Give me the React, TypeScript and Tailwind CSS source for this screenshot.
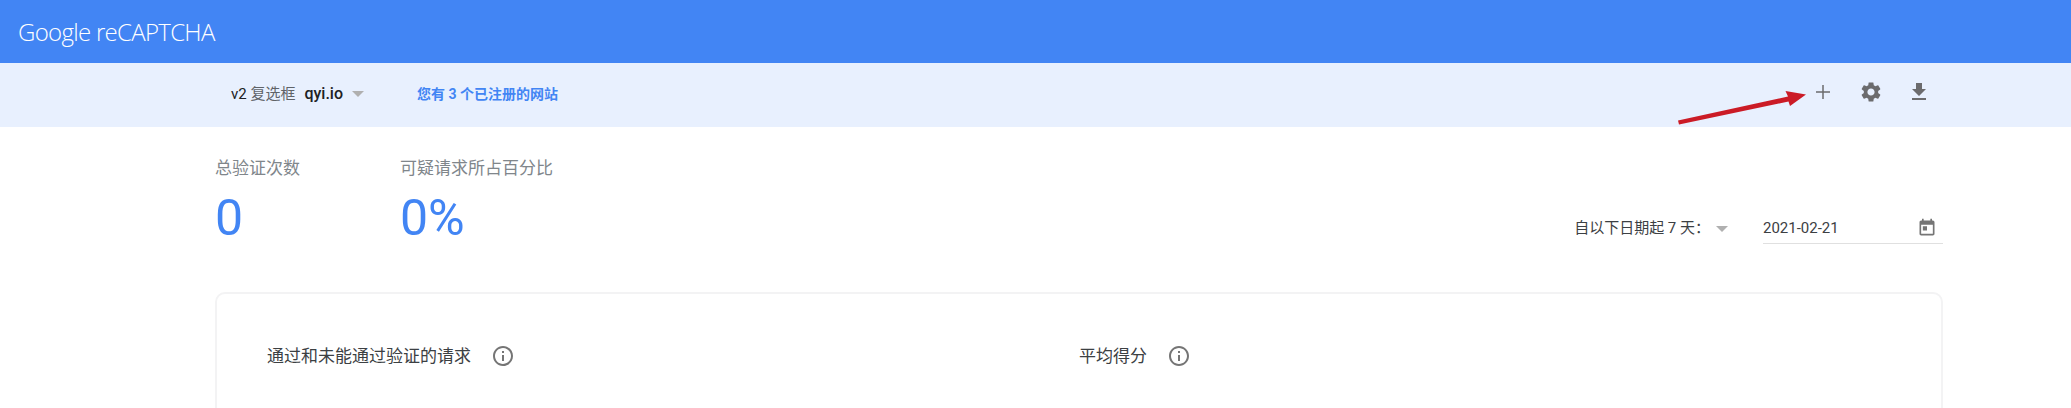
const ui = { fontFamily: 'Roboto, "Noto Sans CJK SC", sans-serif' }

function MaterialIcon({ d, className }: { d: string; className: string }) {
  return (
    <svg viewBox="0 0 24 24" className={className} fill="currentColor">
      <path d={d} />
    </svg>
  )
}

const icons = {
  plus: 'M19 12.75h-6.25V19h-1.5v-6.25H5v-1.5h6.25V5h1.5v6.25H19v1.5z',
  settings:
    'M19.14 12.94c.04-.3.06-.61.06-.94 0-.32-.02-.64-.07-.94l2.03-1.58c.18-.14.23-.41.12-.61l-1.92-3.32c-.12-.22-.37-.29-.59-.22l-2.39.96c-.5-.38-1.03-.7-1.62-.94l-.36-2.54c-.04-.24-.24-.41-.48-.41h-3.84c-.24 0-.43.17-.47.41l-.36 2.54c-.59.24-1.13.57-1.62.94l-2.39-.96c-.22-.08-.47 0-.59.22L2.74 8.87c-.12.21-.08.47.12.61l2.03 1.58c-.05.3-.09.63-.09.94s.02.64.07.94l-2.03 1.58c-.18.14-.23.41-.12.61l1.92 3.32c.12.22.37.29.59.22l2.39-.96c.5.38 1.03.7 1.62.94l.36 2.54c.05.24.24.41.48.41h3.84c.24 0 .44-.17.47-.41l.36-2.54c.59-.24 1.13-.56 1.62-.94l2.39.96c.22.08.47 0 .59-.22l1.92-3.32c.12-.22.07-.47-.12-.61l-2.01-1.58zM12 15.6c-1.98 0-3.6-1.62-3.6-3.6s1.62-3.6 3.6-3.6 3.6 1.62 3.6 3.6-1.62 3.6-3.6 3.6z',
  download: 'M19 9h-4V3H9v6H5l7 7 7-7zM5 18v2h14v-2H5z',
  today:
    'M19 3h-1V1h-2v2H8V1H6v2H5c-1.11 0-1.99.9-1.99 2L3 19c0 1.1.89 2 2 2h14c1.1 0 2-.9 2-2V5c0-1.1-.9-2-2-2zm0 16H5V8h14v11zM7 10h5v5H7z',
  info:
    'M11 7h2v2h-2zm0 4h2v6h-2zm1-9C6.48 2 2 6.48 2 12s4.48 10 10 10 10-4.48 10-10S17.52 2 12 2zm0 18c-4.41 0-8-3.59-8-8s3.59-8 8-8 8 3.59 8 8-3.59 8-8 8z',
}

function Caret({ className }: { className: string }) {
  return <span className={`h-0 w-0 border-x-[6px] border-t-[6px] border-x-transparent border-t-[#b0b0b0] ${className}`} />
}

function Stat({ label, value, className }: { label: string; value: string; className: string }) {
  return (
    <div className={className}>
      <div className="text-[17px] leading-[24px] text-[#80868b]">{label}</div>
      <div className="mt-[10px] text-[50px] leading-[56px] text-[#4285f4]">{value}</div>
    </div>
  )
}

function ChartTitle({ title, className }: { title: string; className: string }) {
  return (
    <div className={`flex items-center ${className}`}>
      <span className="text-[17px] leading-[22px] text-[#3c4043]">{title}</span>
      <MaterialIcon d={icons.info} className="ml-[20px] h-6 w-6 text-[#757575]" />
    </div>
  )
}

export default function App() {
  return (
    <div className="h-[408px] w-[2071px] overflow-hidden bg-white" style={ui}>
      <header className="flex h-[63px] items-center bg-[#4285f4] pl-[18px]">
        <span className="text-[24px] tracking-[-0.7px] text-white" style={{ fontFamily: '"Open Sans", sans-serif', fontWeight: 300 }}>
          Google reCAPTCHA
        </span>
      </header>

      <div className="relative flex h-[64px] items-center bg-[#e8f0fe] pb-[2px] pl-[231px] pr-[140px]">
        <span className="text-[15px] text-[#5f6368]">
          <span className="text-[#202124]">v2</span> 复选框
        </span>
        <span className="ml-[9px] text-[16px] font-medium text-[#202124]">qyi.io</span>
        <Caret className="ml-[9px]" />
        <span className="ml-[53px] text-[14px] font-bold text-[#4285f4]">您有 3 个已注册的网站</span>

        <div className="-mt-[5px] ml-auto flex gap-6 text-[#6b6b6d]">
          <MaterialIcon d={icons.plus} className="h-6 w-6" />
          <MaterialIcon d={icons.settings} className="h-6 w-6" />
          <MaterialIcon d={icons.download} className="h-6 w-6" />
        </div>

        {/* annotation arrow drawn on top of the screenshot */}
        <svg className="absolute left-[1670px] top-[24px] h-[40px] w-[145px]" viewBox="0 0 145 40">
          <path d="M8 33.5 L118 9.5 L115.5 4 L136 7.5 L120 19 L118.5 14.5 L9 37.5 Z" fill="#cb1b26" />
        </svg>
      </div>

      <div className="flex items-start pl-[215px] pr-[128px] pt-[29px]">
        <Stat label="总验证次数" value="0" className="w-[185px]" />
        <Stat label="可疑请求所占百分比" value="0%" className="w-[300px]" />

        <div className="ml-auto mt-[57px] flex items-center">
          <span className="text-[15px] text-[#3c4043]">自以下日期起 7 天：</span>
          <Caret className="ml-[6px]" />
          <div className="ml-[35px] flex h-[31px] w-[180px] items-center justify-between border-b border-[#e0e0e0]">
            <span className="text-[15px] text-[#3c4043]">2021-02-21</span>
            <MaterialIcon d={icons.today} className="mr-[6px] h-5 w-5 text-[#757575]" />
          </div>
        </div>
      </div>

      <div className="ml-[215px] mt-[46px] h-[160px] w-[1728px] rounded-[10px] border-2 border-[#f3f3f4] pt-[50px]">
        <div className="flex">
          <ChartTitle title="通过和未能通过验证的请求" className="ml-[50px] w-[812px]" />
          <ChartTitle title="平均得分" className="" />
        </div>
      </div>
    </div>
  )
}
